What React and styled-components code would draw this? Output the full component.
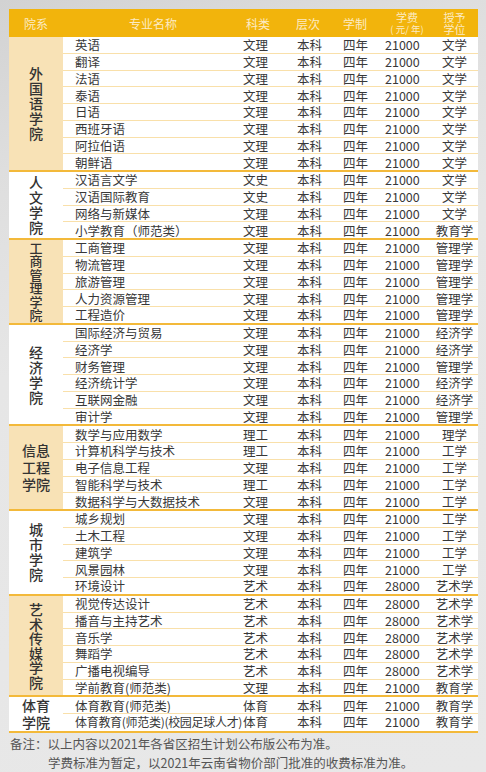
import React from "react";
import styled, { createGlobalStyle } from "styled-components";

const Global = createGlobalStyle`
  html, body { margin: 0; padding: 0; }
  body {
    background: #e4e4e4;
    font-family: "Noto Sans CJK SC", "Noto Sans", "Liberation Sans", sans-serif;
  }
`;

const COLS = "180px 50px 48px 42px 48px 1fr";

const Page = styled.div`
  width: 486px;
  height: 772px;
  box-sizing: border-box;
  padding: 9px 8px 0 9px;
  background: linear-gradient(160deg, #d2d2d2 0%, #dedede 18%, #e6e6e6 40%, #e8e8e8 100%);
  overflow: hidden;
`;

const Table = styled.div`
  width: 469px;
  background: #fff;
  border-bottom: 2px solid #f3b93a;
`;

const Header = styled.div`
  display: grid;
  grid-template-columns: 54px ${COLS};
  height: 28px;
  background: #f2b40c;
  color: #fcebc4;
  font-size: 12px;
  align-items: center;
`;

const HeadCell = styled.div`
  padding-left: ${(p) => p.$pad || 0}px;
  display: flex;
  flex-direction: column;
  align-items: ${(p) => (p.$align === "left" ? "flex-start" : "center")};
  line-height: 13px;
`;

const HeadLine = styled.span`
  display: block;
  font-size: ${(p) => p.$size || 12}px;
  line-height: 12.5px;
  white-space: nowrap;
`;

const Group = styled.div`
  display: grid;
  grid-template-columns: 54px 1fr;
  border-top: ${(p) => (p.$first ? "none" : "2px solid #f3b93a")};
`;

const Dept = styled.div`
  background: ${(p) => (p.$beige ? "#f8e2b6" : "#ffffff")};
  display: flex;
  align-items: center;
  justify-content: center;
  text-align: center;
  color: #333;
  font-size: ${(p) => p.$size || 14}px;
  line-height: ${(p) => p.$lh || 15}px;
  font-weight: 500;
  white-space: pre-line;
`;

const Rows = styled.div`
  display: flex;
  flex-direction: column;
`;

const Row = styled.div`
  display: grid;
  grid-template-columns: ${COLS};
  height: 15.75px;
  align-items: center;
  font-size: 12.5px;
  line-height: 15px;
  color: #383838;
  border-top: ${(p) => (p.$first ? "none" : "1px solid #f9e0aa")};
  white-space: nowrap;
`;

const Cell = styled.div`
  padding-left: ${(p) => p.$pad || 0}px;
  text-align: ${(p) => p.$align || "left"};
  font-size: ${(p) => (p.$tight ? "12px" : "inherit")};
  letter-spacing: ${(p) => (p.$tight ? "-0.3px" : "0")};
`;

const Note = styled.div`
  margin-top: 1px;
  padding-left: 1px;
  font-size: 12.5px;
  line-height: 19px;
  color: #555;
`;

const NoteLine = styled.div`
  padding-left: ${(p) => p.$indent || 0}px;
`;

const R = (name, type, fee, degree, tight) => ({ name, type, fee, degree, tight });

const groups = [
  {
    name: "外\n国\n语\n学\n院",
    beige: true,
    rows: ["英语", "翻译", "法语", "泰语", "日语", "西班牙语", "阿拉伯语", "朝鲜语"].map((n) =>
      R(n, "文理", "21000", "文学")
    ),
  },
  {
    name: "人\n文\n学\n院",
    beige: false,
    rows: [
      R("汉语言文学", "文史", "21000", "文学"),
      R("汉语国际教育", "文史", "21000", "文学"),
      R("网络与新媒体", "文理", "21000", "文学"),
      R("小学教育（师范类）", "文理", "21000", "教育学"),
    ],
  },
  {
    name: "工\n商\n管\n理\n学\n院",
    beige: true,
    size: 13,
    lh: 13.5,
    rows: ["工商管理", "物流管理", "旅游管理", "人力资源管理", "工程造价"].map((n) =>
      R(n, "文理", "21000", "管理学")
    ),
  },
  {
    name: "经\n济\n学\n院",
    beige: false,
    rows: [
      R("国际经济与贸易", "文理", "21000", "经济学"),
      R("经济学", "文理", "21000", "经济学"),
      R("财务管理", "文理", "21000", "管理学"),
      R("经济统计学", "文理", "21000", "经济学"),
      R("互联网金融", "文理", "21000", "经济学"),
      R("审计学", "文理", "21000", "管理学"),
    ],
  },
  {
    name: "信息\n工程\n学院",
    beige: true,
    lh: 17,
    rows: [
      R("数学与应用数学", "理工", "21000", "理学"),
      R("计算机科学与技术", "理工", "21000", "工学"),
      R("电子信息工程", "文理", "21000", "工学"),
      R("智能科学与技术", "理工", "21000", "工学"),
      R("数据科学与大数据技术", "文理", "21000", "工学"),
    ],
  },
  {
    name: "城\n市\n学\n院",
    beige: false,
    rows: [
      R("城乡规划", "文理", "21000", "工学"),
      R("土木工程", "文理", "21000", "工学"),
      R("建筑学", "文理", "21000", "工学"),
      R("风景园林", "文理", "21000", "工学"),
      R("环境设计", "艺术", "28000", "艺术学"),
    ],
  },
  {
    name: "艺\n术\n传\n媒\n学\n院",
    beige: true,
    lh: 14.5,
    rows: [
      R("视觉传达设计", "艺术", "28000", "艺术学"),
      R("播音与主持艺术", "艺术", "28000", "艺术学"),
      R("音乐学", "艺术", "28000", "艺术学"),
      R("舞蹈学", "艺术", "28000", "艺术学"),
      R("广播电视编导", "艺术", "28000", "艺术学"),
      R("学前教育(师范类)", "文理", "21000", "教育学"),
    ],
  },
  {
    name: "体育\n学院",
    beige: false,
    lh: 17,
    rows: [
      R("体育教育(师范类)", "体育", "21000", "教育学"),
      R("体育教育(师范类)(校园足球人才)", "体育", "21000", "教育学", true),
    ],
  },
];

export default function App() {
  return (
    <>
      <Global />
      <Page>
        <Table>
          <Header>
            <HeadCell>院系</HeadCell>
            <HeadCell>专业名称</HeadCell>
            <HeadCell $align="left" $pad={3}>科类</HeadCell>
            <HeadCell $align="left" $pad={3}>层次</HeadCell>
            <HeadCell $align="left" $pad={2}>学制</HeadCell>
            <HeadCell>
              <HeadLine $size={11}>学费</HeadLine>
              <HeadLine $size={9.5}>( 元/ 年)</HeadLine>
            </HeadCell>
            <HeadCell>
              <HeadLine $size={11}>授予</HeadLine>
              <HeadLine $size={11}>学位</HeadLine>
            </HeadCell>
          </Header>
          {groups.map((g, gi) => (
            <Group key={gi} $first={gi === 0}>
              <Dept $beige={g.beige} $lh={g.lh} $size={g.size}>
                {g.name}
              </Dept>
              <Rows>
                {g.rows.map((r, ri) => (
                  <Row key={ri} $first={ri === 0}>
                    <Cell $pad={12} $tight={r.tight}>{r.name}</Cell>
                    <Cell>{r.type}</Cell>
                    <Cell $pad={4}>本科</Cell>
                    <Cell $pad={2}>四年</Cell>
                    <Cell $pad={2}>{r.fee}</Cell>
                    <Cell $align="center">{r.degree}</Cell>
                  </Row>
                ))}
              </Rows>
            </Group>
          ))}
        </Table>
        <Note>
          <NoteLine>备注：以上内容以2021年各省区招生计划公布版公布为准。</NoteLine>
          <NoteLine $indent={38}>学费标准为暂定，以2021年云南省物价部门批准的收费标准为准。</NoteLine>
        </Note>
      </Page>
    </>
  );
}
